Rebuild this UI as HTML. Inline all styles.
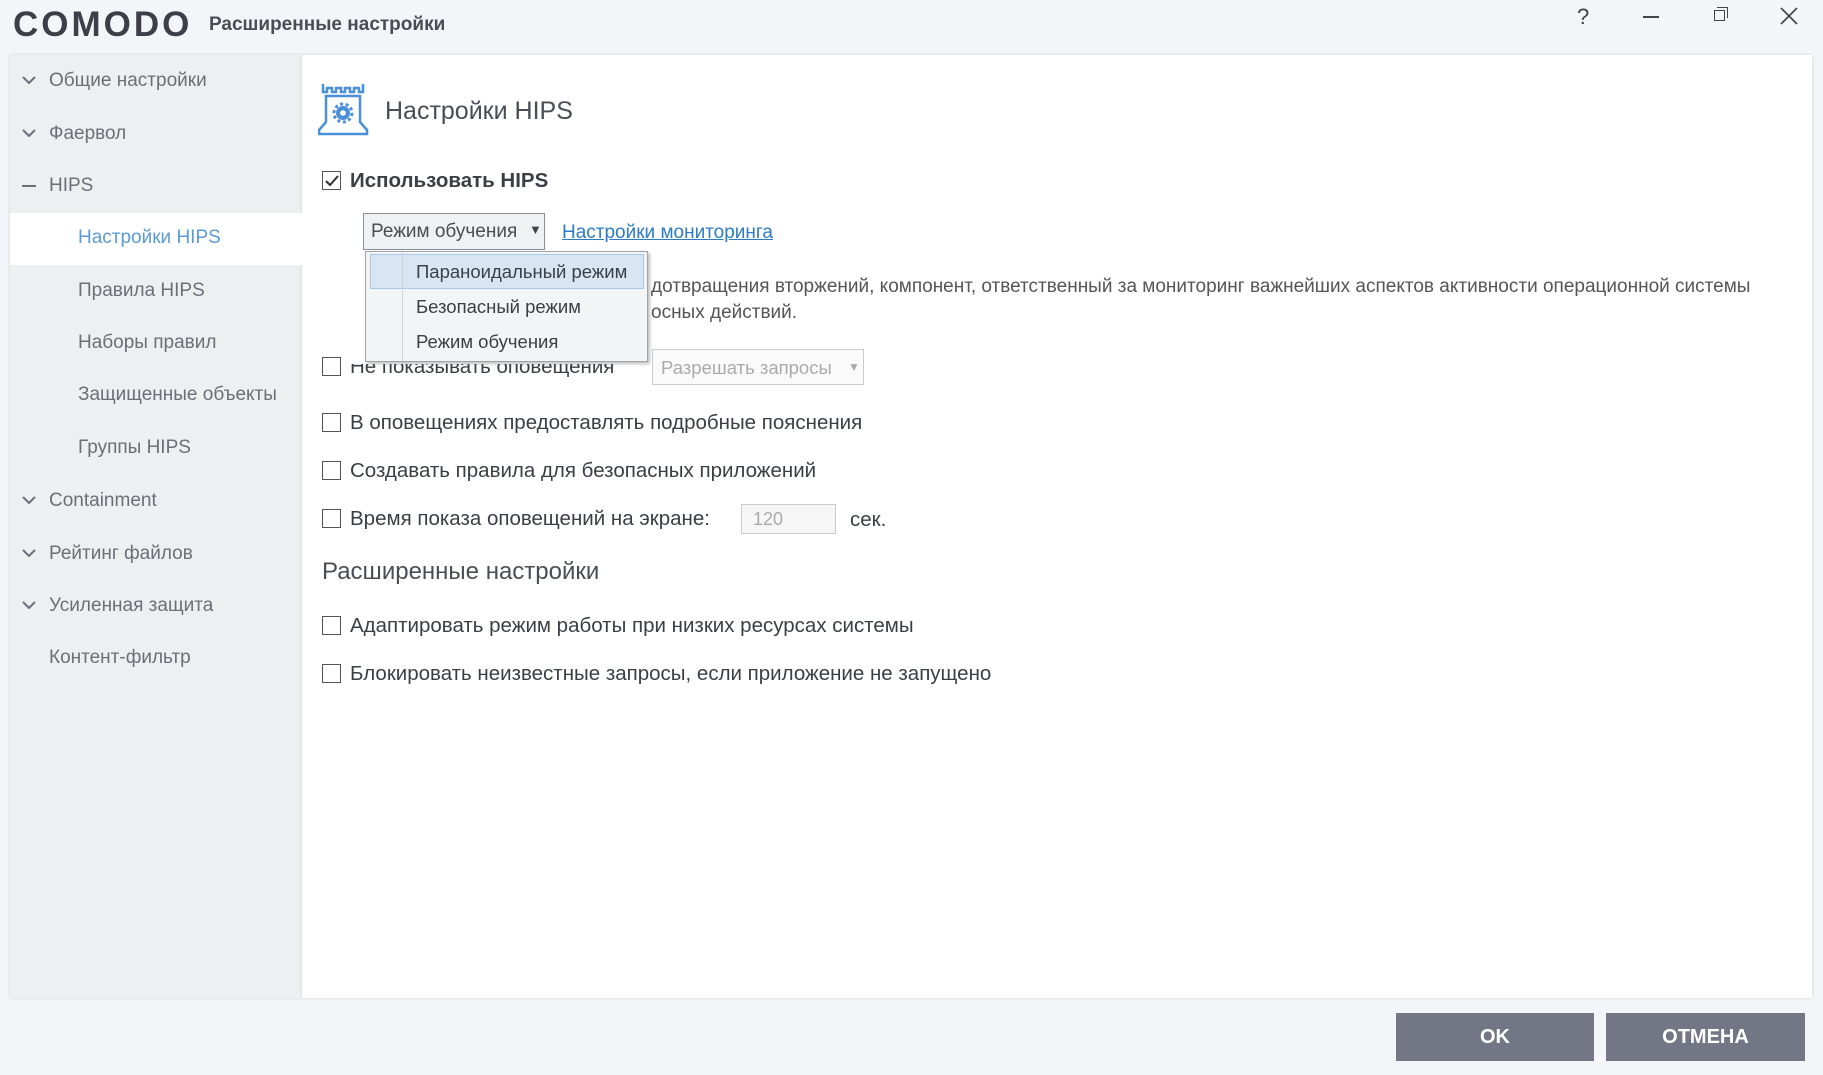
<!DOCTYPE html>
<html><head><meta charset="utf-8"><style>
*{margin:0;padding:0;box-sizing:border-box}
body{width:1823px;height:1075px;background:#f3f5f8;font-family:"Liberation Sans","Noto Sans CJK SC",sans-serif;position:relative;overflow:hidden;color:#3b3e45}
.a{position:absolute;white-space:nowrap}
.logo{left:13px;top:5px;font-size:35px;font-weight:bold;color:#3c3f47;letter-spacing:3px}
.ttl{left:209px;top:14px;font-size:19px;color:#4a4d55;font-weight:600}
.wc{top:4px;font-size:22px;color:#444}
#side{left:10px;top:55px;width:292px;height:943px;background:#eeeff1;box-shadow:0 0 3px rgba(0,0,0,.15)}
#main{left:302px;top:55px;width:1510px;height:943px;background:#fff;box-shadow:0 0 3px rgba(0,0,0,.15)}
.si{font-size:19px;color:#6b6f78}
.cb{width:19px;height:19px;border:1.5px solid #555;background:#fff}
.t{font-size:20.5px;color:#3b3e45}
.btn{top:1013px;height:48px;background:#737785;color:#fff;font-weight:bold;font-size:20px;text-align:center;line-height:48px}
</style></head><body>
<div class="a logo">COMODO</div>
<div class="a ttl">Расширенные настройки</div>
<div class="a wc" style="left:1577px">?</div>
<div class="a" style="left:1643px;top:16px;width:16px;height:1.5px;background:#444"></div>
<div class="a" style="left:1714px;top:10px;width:11px;height:11px;border:1.5px solid #444"></div>
<div class="a" style="left:1717px;top:7px;width:11px;height:11px;border-top:1.5px solid #444;border-right:1.5px solid #444"></div>
<svg class="a" style="left:1780px;top:7px" width="18" height="18"><path d="M1 1L17 17M17 1L1 17" stroke="#444" stroke-width="1.6"/></svg>

<div class="a" id="side"></div>
<div class="a" id="main"></div>
<div class="a" style="left:10px;top:213px;width:292px;height:52px;background:#fff"></div>

<svg class="a" style="left:22px;top:76px" width="14" height="10"><path d="M1 1L7 7L13 1" stroke="#6b6f78" stroke-width="2" fill="none"/></svg>
<div class="a si" style="left:49px;top:70px">Общие настройки</div>
<svg class="a" style="left:22px;top:129px" width="14" height="10"><path d="M1 1L7 7L13 1" stroke="#6b6f78" stroke-width="2" fill="none"/></svg>
<div class="a si" style="left:49px;top:123px">Фаервол</div>
<div class="a" style="left:22px;top:185px;width:14px;height:2px;background:#6b6f78"></div>
<div class="a si" style="left:49px;top:175px">HIPS</div>
<div class="a si" style="left:78px;top:227px;color:#5b9bd5">Настройки HIPS</div>
<div class="a si" style="left:78px;top:280px">Правила HIPS</div>
<div class="a si" style="left:78px;top:332px">Наборы правил</div>
<div class="a si" style="left:78px;top:384px">Защищенные объекты</div>
<div class="a si" style="left:78px;top:437px">Группы HIPS</div>
<svg class="a" style="left:22px;top:496px" width="14" height="10"><path d="M1 1L7 7L13 1" stroke="#6b6f78" stroke-width="2" fill="none"/></svg>
<div class="a si" style="left:49px;top:490px">Containment</div>
<svg class="a" style="left:22px;top:549px" width="14" height="10"><path d="M1 1L7 7L13 1" stroke="#6b6f78" stroke-width="2" fill="none"/></svg>
<div class="a si" style="left:49px;top:543px">Рейтинг файлов</div>
<svg class="a" style="left:22px;top:601px" width="14" height="10"><path d="M1 1L7 7L13 1" stroke="#6b6f78" stroke-width="2" fill="none"/></svg>
<div class="a si" style="left:49px;top:595px">Усиленная защита</div>
<div class="a si" style="left:49px;top:647px">Контент-фильтр</div>

<svg class="a" style="left:318px;top:82px" width="56" height="54" viewBox="0 0 56 54">
<path d="M5 2V10H9V6H14V10H18V6H23V10H27V6H32V10H36V6H41V10H45V2" fill="none" stroke="#4a90d9" stroke-width="2.5"/>
<path d="M8 14H42V40L49 48V52H1V48L8 40Z" fill="none" stroke="#4a90d9" stroke-width="2.5"/>
<circle cx="25" cy="31" r="7" fill="#4a90d9"/><circle cx="25" cy="31" r="9" fill="none" stroke="#4a90d9" stroke-width="3" stroke-dasharray="3 2.6"/><circle cx="25" cy="31" r="2.8" fill="#fff"/>
</svg>
<div class="a" style="left:385px;top:97px;font-size:25px;color:#4a4d55">Настройки HIPS</div>

<div class="a cb" style="left:322px;top:171px"></div>
<svg class="a" style="left:324px;top:173px" width="16" height="16"><path d="M2 8L6 12L14 3" stroke="#333" stroke-width="2" fill="none"/></svg>
<div class="a t" style="left:350px;top:169px;font-weight:bold">Использовать HIPS</div>

<div class="a" style="left:363px;top:213px;width:182px;height:37px;border:1px solid #8a8d94;background:#f0f1f3"></div>
<div class="a t" style="left:371px;top:221px;font-size:19px;color:#4a4d55">Режим обучения</div>
<div class="a" style="left:529px;top:222px;font-size:13px;color:#444">▼</div>
<div class="a t" style="left:562px;top:222px;font-size:19px;color:#2b7bc5;text-decoration:underline">Настройки мониторинга</div>

<div class="a t" style="left:651px;top:276px;font-size:19px;color:#555">дотвращения вторжений, компонент, ответственный за мониторинг важнейших аспектов активности операционной системы</div>
<div class="a t" style="left:651px;top:302px;font-size:19px;color:#555">осных действий.</div>

<div class="a" style="left:365px;top:251px;width:283px;height:111px;background:#f3f4f6;border:1px solid #a0a3a8;box-shadow:2px 2px 3px rgba(0,0,0,.25)"></div>
<div class="a" style="left:370px;top:254px;width:274px;height:35px;background:#d8e6f4;border:1px solid #a9c8e8"></div>
<div class="a" style="left:402px;top:252px;width:1px;height:109px;background:#d0d3d8"></div>
<div class="a t" style="left:416px;top:261px;font-size:18.5px">Параноидальный режим</div>
<div class="a t" style="left:416px;top:296px;font-size:18.5px">Безопасный режим</div>
<div class="a t" style="left:416px;top:331px;font-size:18.5px">Режим обучения</div>

<div class="a cb" style="left:322px;top:357px"></div>
<div class="a t" style="left:350px;top:355px;clip-path:inset(9px 0 0 0)">Не показывать оповещения</div>
<div class="a" style="left:652px;top:349px;width:212px;height:36px;border:1px solid #c9cbd0;background:#fafafa"></div>
<div class="a t" style="left:661px;top:357px;font-size:18.5px;color:#aaa">Разрешать запросы</div>
<div class="a" style="left:848px;top:360px;font-size:12px;color:#aaa">▼</div>

<div class="a cb" style="left:322px;top:413px"></div>
<div class="a t" style="left:350px;top:411px">В оповещениях предоставлять подробные пояснения</div>
<div class="a cb" style="left:322px;top:461px"></div>
<div class="a t" style="left:350px;top:459px">Создавать правила для безопасных приложений</div>
<div class="a cb" style="left:322px;top:509px"></div>
<div class="a t" style="left:350px;top:507px">Время показа оповещений на экране:</div>
<div class="a" style="left:741px;top:504px;width:95px;height:30px;border:1px solid #c9cbd0;background:#f6f6f6"></div>
<div class="a t" style="left:753px;top:509px;font-size:18px;color:#aaa">120</div>
<div class="a t" style="left:850px;top:508px">сек.</div>

<div class="a" style="left:322px;top:558px;font-size:24px;color:#4a4d55">Расширенные настройки</div>
<div class="a cb" style="left:322px;top:616px"></div>
<div class="a t" style="left:350px;top:614px">Адаптировать режим работы при низких ресурсах системы</div>
<div class="a cb" style="left:322px;top:664px"></div>
<div class="a t" style="left:350px;top:662px">Блокировать неизвестные запросы, если приложение не запущено</div>

<div class="a btn" style="left:1396px;width:198px">OK</div>
<div class="a btn" style="left:1606px;width:199px">ОТМЕНА</div>
</body></html>
